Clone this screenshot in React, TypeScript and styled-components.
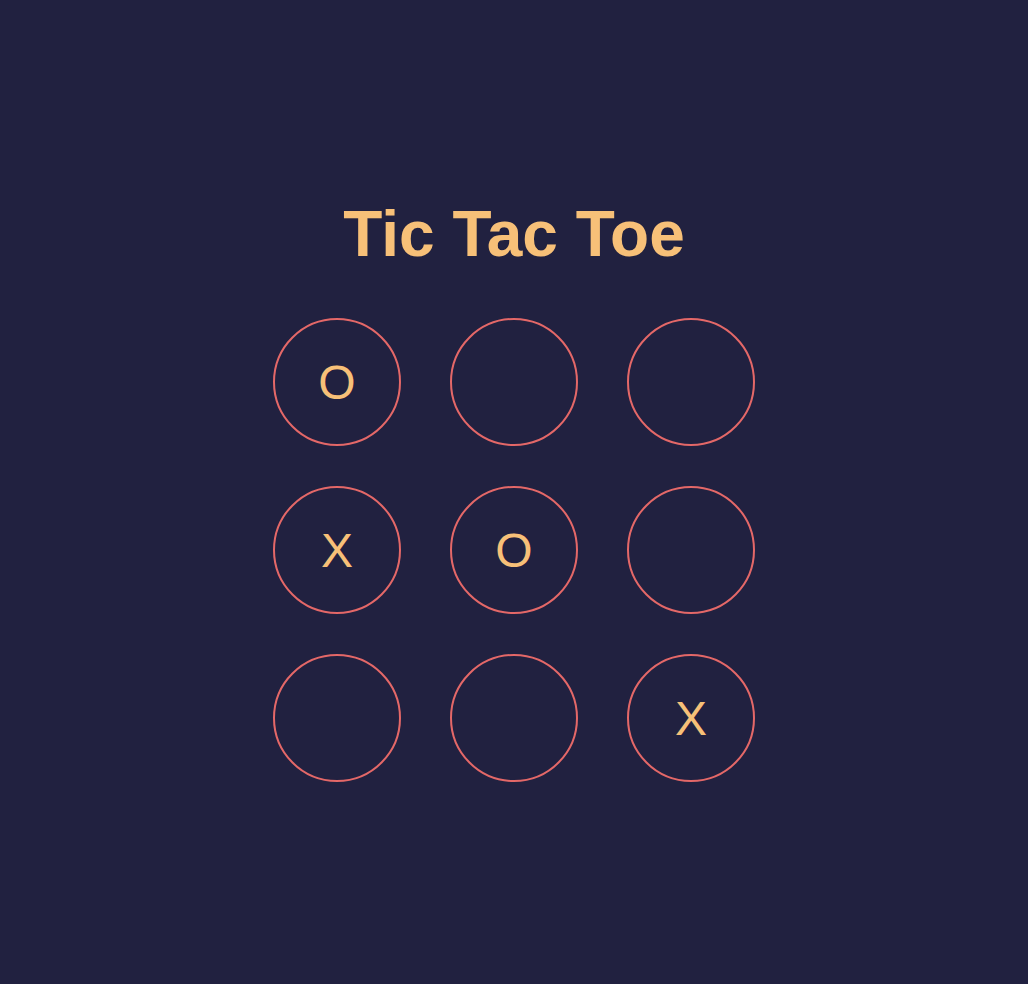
import React from "react";
import styled, { createGlobalStyle } from "styled-components";

const GlobalStyle = createGlobalStyle`
  html, body {
    margin: 0;
    padding: 0;
    background: #212140;
  }
  * { box-sizing: border-box; }
`;

const Page = styled.main`
  min-height: 100vh;
  display: flex;
  flex-direction: column;
  align-items: center;
  justify-content: center;
  font-family: "Liberation Sans", Arial, Helvetica, sans-serif;
  background: #212140;
  padding-bottom: 5px;
`;

const Title = styled.h1`
  margin: 0 0 47px;
  font-size: 64px;
  line-height: 74px;
  font-weight: 700;
  color: #f7c078;
`;

const Board = styled.div`
  display: grid;
  grid-template-columns: repeat(3, 128px);
  grid-auto-rows: 128px;
  column-gap: 49px;
  row-gap: 40px;
`;

const Cell = styled.button<{ $filled: boolean }>`
  width: 128px;
  height: 128px;
  border-radius: 50%;
  border: 2px solid #e46868;
  background: transparent;
  color: #f7c078;
  font-family: "Liberation Sans", Arial, Helvetica, sans-serif;
  font-size: 48px;
  font-weight: 400;
  display: flex;
  align-items: center;
  justify-content: center;
  padding: 0;
  cursor: ${(p) => (p.$filled ? "default" : "pointer")};
`;

const cells = ["O", "", "", "X", "O", "", "", "", "X"];

export default function App() {
  return (
    <>
      <GlobalStyle />
      <Page>
        <Title>Tic Tac Toe</Title>
        <Board>
          {cells.map((v, i) => (
            <Cell key={i} $filled={v !== ""}>
              {v}
            </Cell>
          ))}
        </Board>
      </Page>
    </>
  );
}
